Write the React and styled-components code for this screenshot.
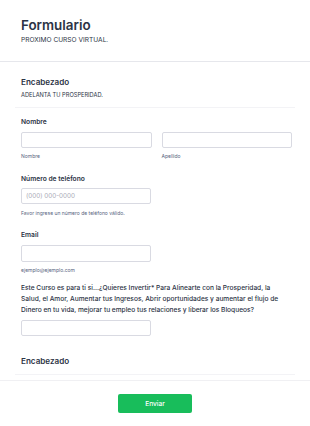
import styled, { createGlobalStyle } from 'styled-components';

const GlobalStyle = createGlobalStyle`
  body {
    margin: 0;
    background: #ffffff;
    font-family: Inter, "Noto Sans", sans-serif;
    color: #2c3345;
  }
`;

function App() {
  return (
    <Page>
      <GlobalStyle />
      <Header>
        <Title>Formulario</Title>
        <Subtitle>PROXIMO CURSO VIRTUAL.</Subtitle>
      </Header>
      <Body>
        <Section>
          <SectionTitle>Encabezado</SectionTitle>
          <SectionSub>ADELANTA TU PROSPERIDAD.</SectionSub>
        </Section>
        <Field>
          <Label>Nombre</Label>
          <Row>
            <Column>
              <Input />
              <SubLabel>Nombre</SubLabel>
            </Column>
            <Column>
              <Input />
              <SubLabel>Apellido</SubLabel>
            </Column>
          </Row>
        </Field>
        <Field>
          <Label>Número de teléfono</Label>
          <Column $half>
            <Input placeholder="(000) 000-0000" />
            <SubLabel>Favor ingrese un número de teléfono válido.</SubLabel>
          </Column>
        </Field>
        <Field>
          <Label>Email</Label>
          <Column $half>
            <Input $tall />
            <SubLabel>ejemplo@ejemplo.com</SubLabel>
          </Column>
        </Field>
        <Field $tight>
          <Question>
            Este Curso es para ti si...¿Quieres Invertir* Para Alinearte con la Prosperidad, la
            Salud, el Amor, Aumentar tus Ingresos, Abrir oportunidades y aumentar el flujo de
            Dinero en tu vida, mejorar tu empleo tus relaciones y liberar los Bloqueos?
          </Question>
          <Column $half>
            <Input />
          </Column>
        </Field>
        <Section $bottom>
          <SectionTitle>Encabezado</SectionTitle>
        </Section>
      </Body>
      <Footer>
        <SubmitButton>Enviar</SubmitButton>
      </Footer>
    </Page>
  );
}

const Page = styled.div`
  width: 310px;
  min-height: 426px;
  background: #fff;
`;

const Header = styled.div`
  padding: 16px 21px 16px;
  border-bottom: 1px solid #e6e7ec;
`;

const Title = styled.h1`
  margin: 0;
  font-size: 13.4px;
  font-weight: 600;
  line-height: 18px;
  color: #2c3345;
`;

const Subtitle = styled.div`
  margin-top: 2px;
  font-size: 6.6px;
  line-height: 9px;
  color: #2c3345;
`;

const Body = styled.div`
  padding: 0 15px;
`;

const Section = styled.div`
  padding: ${(p) => (p.$bottom ? '14.5px 6px 7px' : '14px 6px 8px')};
  border-bottom: 1px solid #f3f3f6;
`;

const SectionTitle = styled.div`
  font-size: 8.1px;
  font-weight: 600;
  line-height: 12px;
  color: #2c3345;
`;

const SectionSub = styled.div`
  margin-top: 3px;
  font-size: 5.7px;
  line-height: 8px;
  color: #2c3345;
`;

const Field = styled.div`
  padding: ${(p) => (p.$tight ? '4.5px' : '9px')} 3px 4.5px 6px;
`;

const Label = styled.div`
  font-size: 6.7px;
  font-weight: 600;
  line-height: 10px;
  color: #2c3345;
  margin-bottom: 4.5px;
`;

const Question = styled.div`
  font-size: 6.6px;
  font-weight: 500;
  line-height: 10.8px;
  color: #2c3345;
  margin: 0 4px 5px 0;
`;

const Row = styled.div`
  display: flex;
  gap: 10px;
`;

const Column = styled.div`
  display: flex;
  flex-direction: column;
  width: ${(p) => (p.$half ? '130px' : 'auto')};
  flex: ${(p) => (p.$half ? 'none' : '1')};
`;

const Input = styled.input`
  box-sizing: border-box;
  width: 100%;
  height: ${(p) => (p.$tall ? '17px' : '16px')};
  margin: 0;
  padding: 0 4px;
  border: 1px solid #d9dae2;
  border-radius: 2px;
  background: #fff;
  font-family: Inter, "Noto Sans", sans-serif;
  font-size: 6.3px;
  color: #2c3345;
  outline: none;
  &::placeholder {
    color: #a8aab5;
  }
`;

const SubLabel = styled.div`
  margin-top: 5.5px;
  font-size: 5px;
  line-height: 7px;
  color: #57647e;
`;

const Footer = styled.div`
  margin-top: 5px;
  border-top: 1px solid #f0f0f3;
  display: flex;
  justify-content: center;
  padding: 13px 0 17px;
`;

const SubmitButton = styled.button`
  width: 74px;
  height: 19px;
  border: none;
  border-radius: 2px;
  background: #18bd5b;
  color: #fff;
  font-family: Inter, "Noto Sans", sans-serif;
  font-size: 6.6px;
  font-weight: 500;
  cursor: pointer;
`;

export default App;
